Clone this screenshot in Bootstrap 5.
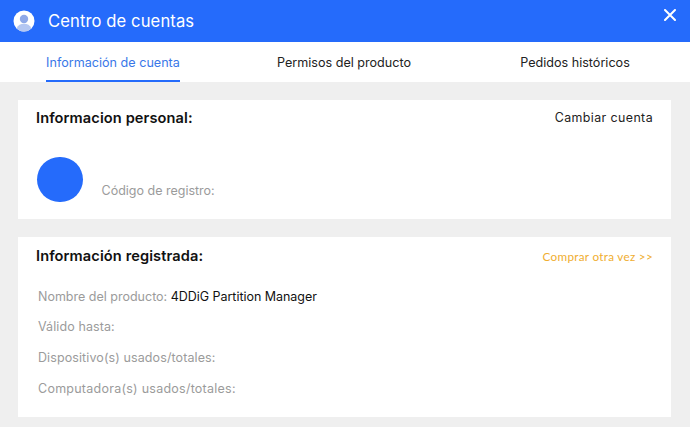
<!DOCTYPE html>
<html lang="es"><head><meta charset="utf-8">
<link href="https://cdn.jsdelivr.net/npm/bootstrap@5.3.0/dist/css/bootstrap.min.css" rel="stylesheet">
<style>
html,body{height:100%;overflow:hidden}
body{background:#efefef;font-family:"Inter","Liberation Sans",sans-serif;color:#111}
.topbar{height:42px;background:#256bfb;color:#fff;padding:0 14px 0 13px}
.topbar h1{font-size:16.6px;font-weight:400;margin:2px 0 0 13px;letter-spacing:.1px}
.closer{margin-top:-13px;background:none;border:0;padding:0;line-height:0}
.tabbar{height:40px;background:#fff}
.tabcell{font-size:12.6px;color:#222;height:40px;line-height:41px}
.tabcell span{display:inline-block;height:40px}
.tabcell .on{color:#3a78e8;border-bottom:2px solid #256bfb}
.tab-a{padding-right:4px}
.tab-b{padding-right:2px}
.panel{background:#fff;margin:0 19px 0 18px}
.p-one{height:119px;margin-top:18px;padding:9px 18px 0}
.p-two{height:180px;margin-top:18px;padding:11px 18px 0}
.ptitle{font-size:14.6px;font-weight:600;color:#111;margin:0;letter-spacing:.1px}
.swap{font-size:12.4px;color:#222;letter-spacing:.4px}
.buy{font-family:"Lato",sans-serif;font-size:11.7px;color:#f0ae30;letter-spacing:.3px}
.disc{width:45.5px;height:45.5px;border-radius:50%;background:#256bfb;margin:0 19px 0 1px}
.faint{font-size:12.5px;color:#9b9b9b}
.facts{margin:16px 0 0 2px}
.facts div{height:30.7px;line-height:30.7px}
.facts b{font-weight:400;color:#111;letter-spacing:-.03px}
.facts .wide1{letter-spacing:.1px}
.facts .wide2{letter-spacing:.25px}
.regline{margin-top:29px}
.regline .faint{padding-top:25px}
</style></head><body>
<div class="topbar d-flex align-items-center">
<svg width="22" height="22" viewBox="0 0 22 22" aria-hidden="true"><circle cx="11" cy="11" r="10.5" fill="#fff"/><circle cx="11" cy="9" r="4.2" fill="#8fa9e8"/><path d="M3.6 18.4c1.4-3.2 4-4.6 7.4-4.6s6 1.4 7.4 4.6A10.4 10.4 0 0 1 11 21.5a10.4 10.4 0 0 1-7.4-3.1z" fill="#b4c7f2"/></svg>
<h1>Centro de cuentas</h1>
<button class="closer ms-auto" type="button" aria-label="Cerrar"><svg width="12" height="12" viewBox="0 0 12 12"><path d="M1 1l10 10M11 1L1 11" stroke="#fff" stroke-width="2" stroke-linecap="round"/></svg></button>
</div>
<div class="tabbar row g-0 text-center">
<div class="col-4 tabcell tab-a"><span class="on">Información de cuenta</span></div>
<div class="col-4 tabcell tab-b"><span>Permisos del producto</span></div>
<div class="col-4 tabcell"><span>Pedidos históricos</span></div>
</div>
<section class="panel p-one">
<div class="d-flex justify-content-between align-items-center"><h2 class="ptitle">Informacion personal:</h2><span class="swap">Cambiar cuenta</span></div>
<div class="d-flex regline"><div class="disc"></div><div class="faint">Código de registro:</div></div>
</section>
<section class="panel p-two">
<div class="d-flex justify-content-between align-items-center"><h2 class="ptitle">Información registrada:</h2><span class="buy">Comprar otra vez &gt;&gt;</span></div>
<div class="facts faint">
<div>Nombre del producto: <b>4DDiG Partition Manager</b></div>
<div class="wide1">Válido hasta:</div>
<div class="wide1">Dispositivo(s) usados/totales:</div>
<div class="wide2">Computadora(s) usados/totales:</div>
</div>
</section>
<script src="https://cdn.jsdelivr.net/npm/bootstrap@5.3.0/dist/js/bootstrap.bundle.min.js"></script>
</body></html>
